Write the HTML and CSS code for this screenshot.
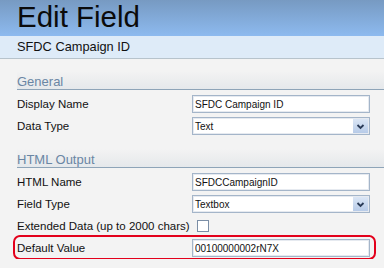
FILE: index.html
```html
<!DOCTYPE html>
<html lang="en">
<head>
    <meta charset="UTF-8">
    <meta name="viewport" content="width=device-width, initial-scale=1.0">
    <title>Edit Field</title>
    <link rel="stylesheet" href="styles.css">
</head>
<body>

    <div class="page-header">
        <h1>Edit Field</h1>
    </div>
    <div class="sub-header">SFDC Campaign ID</div>

    <div class="content">

        <!-- General -->
        <h2 class="section-title">General</h2>
        <div class="field-row">
            <label for="display_name">Display Name</label>
            <input class="text-input" id="display_name" type="text" value="SFDC Campaign ID">
        </div>
        <div class="field-row">
            <label>Data Type</label>
            <div class="select-box">
                <span>Text</span>
                <span class="select-arrow">
                    <svg width="9" height="7" viewBox="0 0 9 7"><path d="M1.5 2 L4.5 5 L7.5 2" fill="none" stroke="#2a3b57" stroke-width="1.8"/></svg>
                </span>
            </div>
        </div>

        <!-- HTML Output -->
        <h2 class="section-title">HTML Output</h2>
        <div class="field-row">
            <label for="html_name">HTML Name</label>
            <input class="text-input" id="html_name" type="text" value="SFDCCampaignID">
        </div>
        <div class="field-row">
            <label>Field Type</label>
            <div class="select-box">
                <span>Textbox</span>
                <span class="select-arrow">
                    <svg width="9" height="7" viewBox="0 0 9 7"><path d="M1.5 2 L4.5 5 L7.5 2" fill="none" stroke="#2a3b57" stroke-width="1.8"/></svg>
                </span>
            </div>
        </div>
        <div class="field-row">
            <label for="extended">Extended Data (up to 2000 chars)</label>
            <div><input class="check" id="extended" type="checkbox"></div>
        </div>
        <div class="field-row highlighted">
            <label for="default_value">Default Value</label>
            <input class="text-input" id="default_value" type="text" value="00100000002rN7X">
        </div>

    </div>

</body>
</html>
```

FILE: styles.css
```css
body {
    margin: 0;
    background-color: #f3f3f3;
    font-family: "Liberation Sans", Arial, sans-serif;
    color: #111;
}

.page-header {
    height: 36px;
    padding-left: 17px;
    background: linear-gradient(#779ac2, #8dbaef);
}

.page-header h1 {
    margin: 0;
    font-size: 29.5px;
    font-weight: normal;
    line-height: 34px;
    color: #0b0b0b;
}

.sub-header {
    height: 22px;
    line-height: 22px;
    padding-left: 17px;
    font-size: 12.8px;
    background-color: #deebf8;
    border-bottom: 1px solid #b7c3cc;
}

.content {
    padding: 0 0 0 17px;
}

.section-title {
    margin: 12px 0 3px;
    height: 15px;
    padding-top: 3px;
    line-height: 15px;
    font-size: 13px;
    font-weight: normal;
    color: #6a86a4;
    border-bottom: 1px solid #8ea4b8;
    background: linear-gradient(rgba(230, 232, 235, 0), #e5e8eb);
}

.field-row {
    display: grid;
    grid-template-columns: 175px 178px;
    width: 353px;
    height: 22px;
    align-items: center;
    font-size: 11.5px;
}

.text-input,
.select-box {
    box-sizing: border-box;
    width: 178px;
    height: 18px;
    margin: 0;
    padding: 0 2px;
    border: 1px solid #a4b5c9;
    box-shadow: inset 0 0 0 1px #e6eaf0;
    background-color: white;
    font-family: "Liberation Sans", Arial, sans-serif;
    font-size: 10px;
    color: #111;
    outline: none;
}

.select-box {
    display: flex;
    align-items: center;
    justify-content: space-between;
    padding-right: 1px;
}

.select-arrow {
    display: flex;
    align-items: center;
    justify-content: center;
    width: 15px;
    height: 14px;
    background: linear-gradient(#dbe6f5, #b7cbe8);
}

.check {
    appearance: none;
    display: block;
    width: 12px;
    height: 12px;
    margin: 0 0 0 5px;
    border: 1px solid #7b8ea6;
    background-color: white;
}

.highlighted {
    position: relative;
}

.highlighted::after {
    content: "";
    position: absolute;
    left: -4px;
    right: -6px;
    top: -2px;
    bottom: -1px;
    border: 2.5px solid #e3001b;
    border-radius: 7px;
}
```
